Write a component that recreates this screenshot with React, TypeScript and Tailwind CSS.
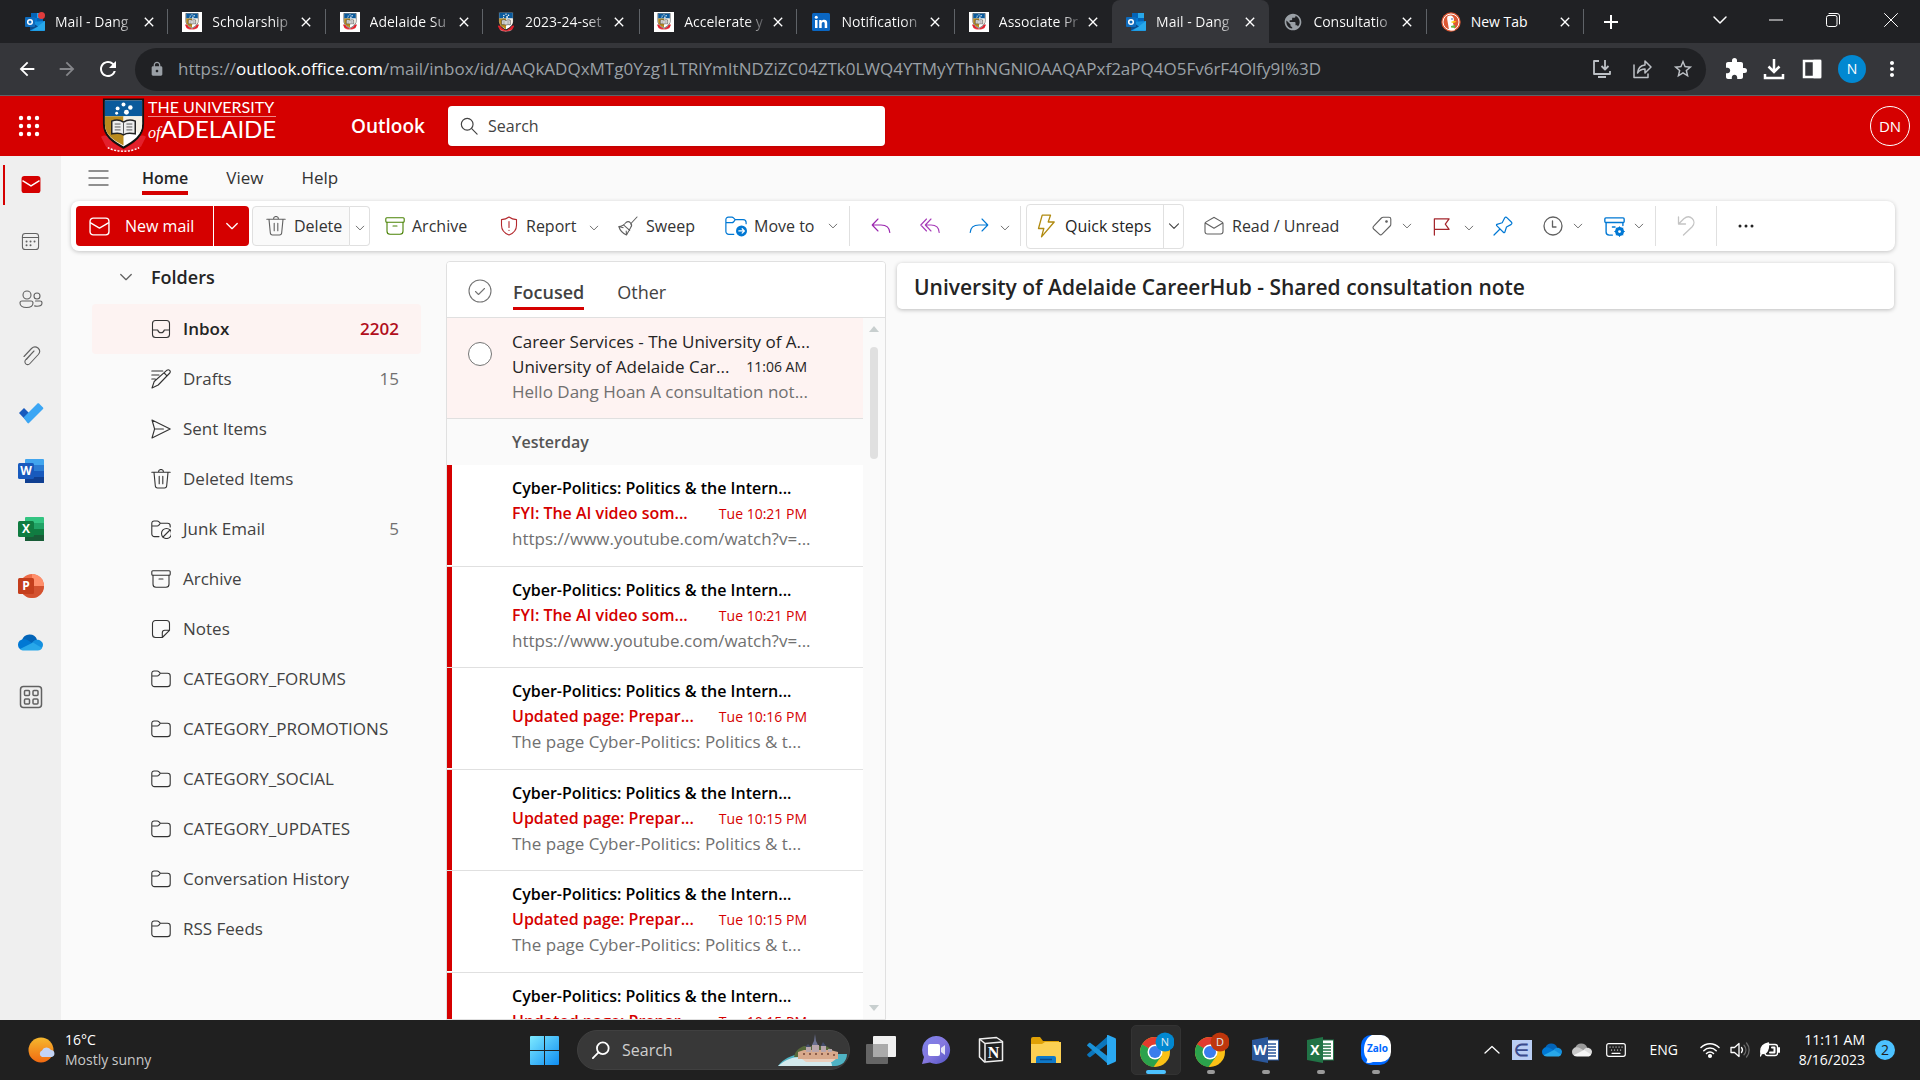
import React from "react";
import {
  MdArrowBack, MdArrowForward, MdRefresh, MdLock, MdStarBorder, MdExtension, MdMoreVert, MdAdd, MdClose, MdPublic,
} from "react-icons/md";

type P = { className?: string };
type SP = P & { children: React.ReactNode; box?: string; sw?: number };

const Svg = ({ className = "size-5", children, box = "0 0 20 20", sw = 1.1 }: SP) => (
  <svg viewBox={box} className={`shrink-0 ${className}`} fill="none" stroke="currentColor" strokeWidth={sw} strokeLinecap="round" strokeLinejoin="round" aria-hidden="true">
    {children}
  </svg>
);

/* ---------- line icons ---------- */
const Chevron = ({ className = "w-3 h-3 text-[#616161]" }: P) => (
  <Svg className={className} box="0 0 12 12" sw={1.1}><path d="M1.5 3.8 6 8.3l4.5-4.5" /></Svg>
);
const Mail = ({ className }: P) => (
  <Svg className={className} sw={1.3}><rect x="1" y="2" width="18" height="16" rx="3" /><path d="m1.5 6.5 8.5 5 8.5-5" /></Svg>
);
const Trash = ({ className }: P) => (
  <Svg className={className}><path d="M.8 3.2h18.4M7.5 3a2.5 2.5 0 0 1 5 0M3 3.4l1.3 13.4c.1 1.2 1 2.2 2.2 2.2h7c1.2 0 2.1-1 2.2-2.2L17 3.4M8.2 7.2v7.6M11.8 7.2v7.6" /></Svg>
);
const Archive = ({ className }: P) => (
  <Svg className={className}><rect x=".8" y="1.8" width="18.4" height="4.4" rx="1" /><path d="M2 6.4v8.8A3 3 0 0 0 5 18.2h10a3 3 0 0 0 3-3V6.4M8 10h4" /></Svg>
);
const Shield = ({ className }: P) => (
  <Svg className={className}><path d="M10 1c2.2 1.7 4.6 2.5 7.5 2.6v5.6c0 5-3 8-7.5 9.8-4.5-1.8-7.5-4.8-7.5-9.8V3.6C5.4 3.5 7.8 2.7 10 1ZM10 5.5v6M10 14.2v.2" /></Svg>
);
const Broom = ({ className }: P) => (
  <Svg className={className}><path d="m19 1-6.5 7M8 6.5c1.5-1.2 3.3-.9 4.5.4 1.3 1.3 1.5 3 .2 4.5L8.5 19C5 17.5 2 14.5.8 10.5 3.5 10.5 6 9 8 6.5ZM5.5 8.900l6.200 5.400M8.500 19l-.3-4M.8 10.500l4.400 1.200" /></Svg>
);
const folderPath = "M.8 4.2A2.2 2.2 0 0 1 3 2h3.3c.6 0 1 .2 1.4.6l1.6 1.6H16.5a2.7 2.7 0 0 1 2.7 2.7v8a2.7 2.7 0 0 1-2.7 2.7H3.5a2.7 2.7 0 0 1-2.7-2.7ZM.8 7h5.500c.6 0 1-.2 1.4-.6l1.6-2.2";
const openFolder = "M8 17.6H3.500a2.7 2.7 0 0 1-2.7-2.7V4.2A2.2 2.2 0 0 1 3 2h3.3c.6 0 1 .2 1.4.6l1.6 1.6H16.5a2.7 2.7 0 0 1 2.7 2.7v1M.8 7h5.5c.6 0 1-.2 1.4-.6l1.6-2.2";
const Folder = ({ className }: P) => <Svg className={className}><path d={folderPath} /></Svg>;
const FolderMove = ({ className }: P) => (
  <Svg className={className}><path d={openFolder} /><circle cx="15" cy="14.5" r="5" fill="#0078d4" stroke="none" /><path d="M12.6 14.5h4.8M15.6 12.5l2 2-2 2" stroke="#fff" /></Svg>
);
const Junk = ({ className }: P) => (
  <Svg className={className}><path d={openFolder} /><circle cx="15.5" cy="14.5" r="5" /><path d="m12 18 7-7" /></Svg>
);
const Reply = ({ className }: P) => <Svg className={className}><path d="M7 3 1.2 9 7 15M1.5 9h8.5c5 0 8.500 2.800 8.800 7.500" /></Svg>;
const ReplyAll = ({ className }: P) => <Svg className={className}><path d="M6.5 3 .8 9l5.7 6M11 3 5.3 9l5.7 6M5.5 9H11c5 0 8 3 8.2 7.5" /></Svg>;
const Forward = ({ className }: P) => <Svg className={className}><path d="m13 3 5.8 6L13 15M18.5 9H10C5 9 1.5 11.8 1.2 16.5" /></Svg>;
const Bolt = ({ className }: P) => <Svg className={className} sw={1.3} box="0 0 20 24"><path d="M6.200 1.200h8.300L12.200 8h6L5.500 22.800l2.300-8.300H2.500Z" /></Svg>;
const MailRead = ({ className }: P) => (
  <Svg className={className}><path d="M1 7.500c0-.6.3-1.100.8-1.400L9.300 1.700c.4-.3 1-.3 1.400 0l7.500 4.400c.5.300.8.800.8 1.400v8a2.500 2.500 0 0 1-2.500 2.500h-13A2.500 2.500 0 0 1 1 15.500ZM1.300 7l8.700 5.200L18.700 7" /></Svg>
);
const Tag = ({ className }: P) => (
  <Svg className={className}><path d="M11.200 1.200h5.800c1 0 1.800.8 1.800 1.800v5.300c0 .7-.2 1.200-.7 1.700l-8 8.200c-.8.800-2 .8-2.800 0L1.700 13c-.8-.8-.8-2 0-2.800l7.700-8.200c.5-.5 1.100-.8 1.800-.8Z" /><circle cx="14.5" cy="5.5" r=".8" fill="currentColor" /></Svg>
);
const Flag = ({ className }: P) => <Svg className={className} sw={1.3}><path d="M2.500 19V2h15.500l-4 5.500 4 5.500H2.500" /></Svg>;
const Pin = ({ className }: P) => <Svg className={className} sw={1.2}><path d="M11.500 2.200c.6-1.200 1.600-1.400 2.600-.4l4.200 4.200c1 1 .7 2-.4 2.600L13.500 11l-1.700 5.200c-.2.6-.8.7-1.200.3L3.700 9.600c-.4-.4-.3-1 .3-1.200l5.200-1.700ZM7 13l-6 6" /></Svg>;
const Clock = ({ className }: P) => <Svg className={className} sw={1.3}><circle cx="10" cy="10" r="9" /><path d="M9.500 5v6H13" /></Svg>;
const ArchiveGear = ({ className }: P) => (
  <Svg className={className} sw={1.3}><rect x=".8" y="1.8" width="18.4" height="4.4" rx="1" /><path d="M2 6.4v8.8a3 3 0 0 0 3 3h3M18 6.4V9M8 10.5h2.5" /><circle cx="14.8" cy="14.8" r="3" strokeWidth="2.6" /><path d="M14.8 10.2v9.2M10.2 14.8h9.2M11.6 11.6l6.4 6.4M18 11.6 11.6 18" strokeWidth="1" /><circle cx="14.8" cy="14.8" r="1.3" fill="#fff" stroke="none" /></Svg>
);
const Undo = ({ className }: P) => <Svg className={className} sw={1.3}><path d="M2.500 1v7H9.500M2.800 7.700l5-4.900c3-2.600 6.300-2.300 8.400-.3 2.300 2.300 2.300 5.700 0 8.200L7.500 19" /></Svg>;
const Inbox = ({ className }: P) => <Svg className={className}><rect x="1.5" y="1.5" width="17" height="17" rx="3" /><path d="M1.5 11h5.200c.4 1.700 1.600 2.700 3.300 2.700s2.900-1 3.300-2.700h5.200" /></Svg>;
const Draft = ({ className }: P) => <Svg className={className}><path d="M16 1.200a2 2 0 0 1 2.800 2.800L7.200 16 1 19l2.200-6.500ZM13.200 4l2.800 2.800M.8 2h11M.8 6H8M.8 10h3.500" /></Svg>;
const Send = ({ className }: P) => <Svg className={className}><path d="M1 1l18.200 9L1 19l2.600-9ZM3.600 10h8.800" /></Svg>;
const Note = ({ className }: P) => <Svg className={className}><path d="M4.500 1.500h11a3 3 0 0 1 3 3v6.800L11.300 18.500H4.500a3 3 0 0 1-3-3v-11a3 3 0 0 1 3-3ZM18.300 11.300h-4.500a2.500 2.500 0 0 0-2.500 2.500v4.500" /></Svg>;
const Magnifier = ({ className, sw = 1.3 }: P & { sw?: number }) => <Svg className={className} sw={sw}><circle cx="8" cy="8" r="6.5" /><path d="m13 13 6 6" /></Svg>;

/* ---------- brand drawings ---------- */
const Crest = ({ className = "w-5 h-5" }: P) => (
  <svg viewBox="0 0 48 56" className={`shrink-0 ${className}`} aria-hidden="true">
    <path d="M1 39c5-3 9 0 12 6l11 7 11-7c3-6 7-9 12-6l-5 10c-8 6-28 8-36 0Z" fill="#e3202c" />
    <path d="M4 1h40v25c0 12-9 18-20 24C13 44 4 38 4 26Z" fill="#fff" stroke="#111" strokeWidth="2" />
    <path d="M5 2h38v16H5Z" fill="#0a5a9c" />
    <path d="M5 18h19v30C13 42 5 37 5 26Z" fill="#b98a1e" />
    <path d="M24 18h19v8c0 4-1 7-3 10L24 24Z" fill="#f4f0e6" />
    <path d="M12 23c5-2 9-1 12 1 3-2 7-3 12-1v13c-5-1-9-1-12 1-3-2-7-2-12-1Z" fill="#eee" stroke="#222" strokeWidth="1.5" />
    <path d="M24 24v12M15 26h6M15 29h6M15 32h6M27 26h6M27 29h6M27 32h6" stroke="#555" />
    <g fill="#fff"><circle cx="24" cy="6" r="2" /><circle cx="18" cy="10" r="2" /><circle cx="31" cy="9" r="2.3" /><circle cx="27" cy="14" r="2.5" /><circle cx="17" cy="15" r="1.5" /></g>
    <path d="M8 50c8 5 24 5 32 0" fill="none" stroke="#fff" strokeWidth="1.5" strokeDasharray="2 1.5" />
  </svg>
);
const CrestTile = () => <span className="grid size-5 shrink-0 place-items-center bg-white"><Crest className="h-[17px] w-4" /></span>;
const OutlookIcon = ({ badge }: { badge?: boolean }) => (
  <svg viewBox="0 0 20 20" className="size-5 shrink-0" aria-hidden="true">
    <path d="M6 1h12v10H6Z" fill="#0364b8" /><path d="M12 1h6v5h-6Z" fill="#28a8ea" /><path d="M6 6h6v5H6Z" fill="#0078d4" />
    <path d="m5 10 15-1v9c0 .6-.4 1-1 1H6c-.6 0-1-.4-1-1Z" fill="#1490df" /><path d="m20 9-13 9.500h12c.6 0 1-.4 1-1Z" fill="#28a8ea" /><path d="m5 9 8 5.500-8 4Z" fill="#0a4b8c" />
    <rect x="0" y="5" width="10" height="10" rx="1" fill="#0f6cbd" /><circle cx="5" cy="10" r="2.3" fill="none" stroke="#fff" strokeWidth="1.5" />
    {badge && <circle cx="16.5" cy="3.5" r="3.5" fill="#e03c3c" />}
  </svg>
);
const LinkedIn = () => (
  <svg viewBox="0 0 20 20" className="size-5 shrink-0" aria-hidden="true"><rect x="1" y="1" width="18" height="18" rx="1.5" fill="#0a66c2" />
    <path d="M4 8h2.500v8H4ZM8.200 8h2.400v1.200c.5-.9 1.400-1.400 2.600-1.400 2.300 0 3 1.400 3 3.500V16h-2.500v-4.200c0-1.100-.3-1.900-1.300-1.900-1.200 0-1.700.9-1.700 2.100v4H8.200Z" fill="#fff" /><circle cx="5.250" cy="5.3" r="1.5" fill="#fff" /></svg>
);
const Duck = () => (
  <svg viewBox="0 0 20 20" className="size-5 shrink-0" aria-hidden="true"><circle cx="10" cy="10" r="9.7" fill="#de5833" /><circle cx="10" cy="10" r="8" fill="none" stroke="#fff" />
    <path d="M7 4c3-1.500 6 0 6 4l-1 3 2 7c-2 .8-4 .6-6-.2L6.500 9C6 6.500 6 5 7 4Z" fill="#fff" /><path d="M10.500 9.500c2-.6 4-.8 5 0-1 1-3 1.500-5 1.200Z" fill="#fdd20a" /><path d="m10 14 4-1v3l-4-.5Z" fill="#65bc46" /><circle cx="11" cy="7" r=".8" fill="#2d4f8e" /></svg>
);
const Todo = () => (
  <svg viewBox="0 0 26 22" className="h-[22px] w-[26px]" aria-hidden="true"><path d="m1 11 5-5 8 8-4.500 6Z" fill="#185abd" /><path d="m5.500 15.500 14-14c.5-.5 1-.5 1.500 0l4 4c.5.500.5 1 0 1.500l-14 14c-.5.5-1 .5-1.500 0Z" fill="#3ba6f4" /></svg>
);
const Office = ({ letter, c }: { letter: string; c: string[] }) => (
  <svg viewBox="0 0 26 24" className="h-6 w-[26px]" aria-hidden="true">
    <rect x="7" y="0" width="19" height="24" rx="1" fill={c[0]} /><path d="M7 6h19v18H7Z" fill={c[1]} /><path d="M7 12h19v12H7Z" fill={c[2]} /><path d="M7 18h19v5a1 1 0 0 1-1 1H7Z" fill={c[3]} />
    <rect x="0" y="4" width="16" height="16" rx="1.5" fill={c[4]} />
    <text x="8" y="16" textAnchor="middle" fontSize="12" fontWeight="700" fontFamily="Open Sans, sans-serif" fill="#fff">{letter}</text>
  </svg>
);
const PowerPoint = () => (
  <svg viewBox="0 0 26 24" className="h-6 w-[26px]" aria-hidden="true">
    <circle cx="14" cy="12" r="12" fill="#ed6c47" /><path d="M14 0a12 12 0 0 1 12 12H14Z" fill="#ff8f6b" /><path d="M26 12a12 12 0 0 1-24 0Z" fill="#d35230" />
    <rect x="0" y="4" width="16" height="16" rx="1.5" fill="#c43e1c" />
    <text x="8" y="16" textAnchor="middle" fontSize="12" fontWeight="700" fontFamily="Open Sans, sans-serif" fill="#fff">P</text>
  </svg>
);
const Cloud = ({ c, className }: P & { c: string[] }) => (
  <svg viewBox="0 0 25 17" className={className} aria-hidden="true"><path d="M4 6a8 8 0 0 1 15-.5l-6 6Z" fill={c[0]} /><path d="M5.500 5.200C9 5 11 7 15 9.500L8 14l-5 1.500C1 15 0 13 0 10.800a5.500 5.500 0 0 1 5.500-5.600Z" fill={c[1]} /><path d="M14 9c1.500-2 3-3.200 5-3.200 3 0 6 2 6 5.200a5 5 0 0 1-2 4Z" fill={c[2]} /><path d="m2 15 13-6.500L24 14c-1 1.800-2.500 2.500-4 2.500H6c-1.700 0-3-.5-4-1.500Z" fill={c[3]} /></svg>
);
const Chrome = ({ letter, color, label }: { letter: string; color: string; label: string }) => (
  <svg viewBox="0 0 36 36" className="size-9" role="img" aria-label={label}>
    <circle cx="17" cy="20" r="15" fill="#fbc116" /><path d="M17 20 4 12.500A15 15 0 0 1 30 12.500H17Z" fill="#e33b2e" /><path d="M17 20 4 12.500A15 15 0 0 0 15.500 35l8-11Z" fill="#2ba24c" /><path d="m10.500 24-6.500-11.500L17 20Z" fill="#2ba24c" />
    <circle cx="17" cy="20" r="7.5" fill="#fff" /><circle cx="17" cy="20" r="6" fill="#3b7ded" />
    <circle cx="27" cy="10" r="9.5" fill={color} /><text x="27" y="14" textAnchor="middle" fontSize="11" fontFamily="Open Sans, sans-serif" fill="#dfe9ef">{letter}</text>
  </svg>
);
const OldOffice = ({ letter, color }: { letter: string; color: string }) => (
  <svg viewBox="0 0 28 28" className="size-7" aria-hidden="true"><rect x="13" y="4" width="13.5" height="20" fill="#fff" stroke={color} /><path d="M15 8h9M15 11h9M15 14h9M15 17h9M15 20h9" stroke={color} strokeWidth="1.5" /><path d="m0 4 16-3v26L0 24Z" fill={color} />
    <text x="8" y="19" textAnchor="middle" fontSize="14" fontWeight="700" fontFamily="Open Sans, sans-serif" fill="#fff">{letter}</text></svg>
);
const Castle = () => (
  <svg viewBox="0 0 70 34" className="h-[34px] w-[70px]" aria-hidden="true">
    <path d="M0 33c5-7 13-11 23-12h46c0 7-5 12-12 12Z" fill="#4fb3c4" /><path d="M0 33c7-6 14-9 22-9h28c2 3 4 6 4 9Z" fill="#d3e9ec" />
    <path d="M16 24c1-6 5-9 10-11h22c6 3 10 7 11 11Z" fill="#56683a" /><path d="M20 19l6-2h26l8 2v7H20Z" fill="#d8a98c" /><path d="M24 26h34l-4 3H28Z" fill="#e9cdbb" />
    <path d="M28 14h5v5h-5ZM34 12h7v7h-7ZM43 13h5v6h-5ZM50 16h4v3h-4Z" fill="#b9a6ac" />
    <path d="M37 1l1 7 2 4h-6l2-4Z" fill="#6b7190" /><path d="m27 14 3-3 3 3ZM43 13l2-4 3 4Z" fill="#454d6c" />
    <path d="M25 20h2v2h-2ZM31 20h2v2h-2ZM37 20h2v2h-2ZM43 20h2v2h-2ZM49 20h2v2h-2ZM55 21h2v2h-2Z" fill="#8c5d4a" />
  </svg>
);

/* ---------- data ---------- */
const tabs: { t: string; i: React.ReactNode; active?: boolean }[] = [
  { t: "Mail - Dang", i: <OutlookIcon badge /> },
  { t: "Scholarship", i: <CrestTile /> },
  { t: "Adelaide Su", i: <CrestTile /> },
  { t: "2023-24-set", i: <Crest className="h-5 w-[18px]" /> },
  { t: "Accelerate y", i: <CrestTile /> },
  { t: "Notification", i: <LinkedIn /> },
  { t: "Associate Pr", i: <CrestTile /> },
  { t: "Mail - Dang", i: <OutlookIcon />, active: true },
  { t: "Consultatio", i: <MdPublic className="size-5 shrink-0 text-[#9aa0a6]" /> },
  { t: "New Tab", i: <Duck /> },
];
const folders = [
  { n: "Inbox", I: Inbox, c: "2202" }, { n: "Drafts", I: Draft, c: "15" }, { n: "Sent Items", I: Send }, { n: "Deleted Items", I: Trash },
  { n: "Junk Email", I: Junk, c: "5" }, { n: "Archive", I: Archive }, { n: "Notes", I: Note }, { n: "CATEGORY_FORUMS", I: Folder },
  { n: "CATEGORY_PROMOTIONS", I: Folder }, { n: "CATEGORY_SOCIAL", I: Folder }, { n: "CATEGORY_UPDATES", I: Folder },
  { n: "Conversation History", I: Folder }, { n: "RSS Feeds", I: Folder },
];
const fyi = { s: "FYI: The AI video som...", p: "https://www.youtube.com/watch?v=..." };
const upd = { s: "Updated page: Prepar...", p: "The page Cyber-Politics: Politics & t..." };
const mails = [
  { ...fyi, t: "Tue 10:21 PM" }, { ...fyi, t: "Tue 10:21 PM" }, { ...upd, t: "Tue 10:16 PM" },
  { ...upd, t: "Tue 10:15 PM" }, { ...upd, t: "Tue 10:15 PM" }, { ...upd, t: "Tue 10:15 PM" },
];

function BrowserBar() {
  return (
    <header className="shrink-0 bg-[#202124] text-white">
      <div className="flex h-[43px] pl-[11px]">
        <div role="tablist" className="flex max-w-[1573px] flex-1">
          {tabs.map((tab, i) => (
            <div key={i} className={`relative flex min-w-0 flex-1 items-center pl-[14px] ${tab.active ? "rounded-t-lg bg-[#35363a]" : ""}`}>
              {tab.i}
              <button role="tab" aria-selected={!!tab.active} className={`ml-[10px] w-[82px] text-left text-[14px] leading-5 whitespace-nowrap ${tab.t === "New Tab" ? "" : "bg-[linear-gradient(to_right,#fff_62px,#4a4b4f_80px)] bg-clip-text text-transparent"}`}>{tab.t}</button>
              <button aria-label="Close tab" className="ml-1"><MdClose className="size-4" /></button>
              {!tab.active && i !== 6 && <span className="absolute top-[9px] right-0 h-[25px] w-px bg-[#5f6368]" />}
            </div>
          ))}
        </div>
        <button aria-label="New tab" className="ml-[15px] self-center"><MdAdd className="size-6" /></button>
        <div className="ml-auto flex items-center pr-[18px] pb-1">
          <button aria-label="Search tabs" className="w-14"><Chevron className="mx-auto size-4 text-white" /></button>
          <button aria-label="Minimize" className="w-14"><Svg className="mx-auto size-[14px]" box="0 0 14 14" sw={1}><path d="M0 7h14" /></Svg></button>
          <button aria-label="Restore" className="w-[58px]"><Svg className="mx-auto size-[14px]" box="0 0 14 14" sw={1}><rect x=".5" y="2.5" width="10.5" height="11" rx="2" /><path d="M3 .5h8a2.500 2.500 0 0 1 2.500 2.500v8" /></Svg></button>
          <button aria-label="Close" className="ml-[18px] w-[22px]"><Svg className="mx-auto size-[14px]" box="0 0 14 14" sw={1}><path d="m.5.500 13 13M13.500.500l-13 13" /></Svg></button>
        </div>
      </div>
      <div className="flex h-[53px] items-center border-b border-[#5f6368] bg-[#35363a] pl-4">
        <button aria-label="Back"><MdArrowBack className="size-[22px]" /></button>
        <button aria-label="Forward" className="ml-[18px]"><MdArrowForward className="size-[22px] text-[#85868a]" /></button>
        <button aria-label="Reload" className="ml-[18px]"><MdRefresh className="size-6" /></button>
        <div className="ml-[15px] flex h-[43px] min-w-0 flex-1 items-center rounded-full bg-[#202124] pr-3 pl-[14px] text-[#9aa0a6]">
          <MdLock className="size-4 shrink-0" />
          <div className="ml-[13px] min-w-0 flex-1 overflow-hidden text-[17px] leading-6 whitespace-nowrap">
            https://<span className="text-white">outlook.office.com</span>/mail/inbox/id/AAQkADQxMTg0Yzg1LTRlYmItNDZiZC04ZTk0LWQ4YTMyYThhNGNlOAAQAPxf2aPQ4O5Fv6rF4Olfy9I%3D
          </div>
          <div className="flex items-center gap-5 text-[#bdc1c6]">
            <button aria-label="Install"><Svg sw={1.8}><path d="M7 2H2v13h16v-3M13 1v9M9.500 7l3.500 3.500L16.500 7M6 18h8" strokeLinecap="butt" /></Svg></button>
            <button aria-label="Share"><Svg sw={1.5}><path d="M2 6v12.500h14V15M5.500 14c.5-5 3-7.500 7.500-8V2l6 6-6 6v-4c-3.500 0-5.500 1-7.500 4Z" /></Svg></button>
            <button aria-label="Bookmark"><MdStarBorder className="size-[22px]" /></button>
          </div>
        </div>
        <div className="ml-[18px] flex items-center gap-[14px] pr-4">
          <button aria-label="Extensions"><MdExtension className="size-6" /></button>
          <button aria-label="Downloads"><Svg className="size-6" box="0 0 24 24" sw={2.5}><path d="M12 2v12M6.500 9.500l5.500 5.500 5.500-5.500M3 17v4h18v-4" strokeLinecap="butt" strokeLinejoin="miter" /></Svg></button>
          <button aria-label="Side panel"><Svg className="size-6" box="0 0 24 24" sw={2.5}><path d="M4 4h16v16H4Z" strokeLinejoin="miter" /><path d="M14 4h6v16h-6Z" fill="currentColor" /></Svg></button>
          <button className="size-7 rounded-full bg-[#0288d1] text-[14px] leading-7">N</button>
          <button aria-label="Menu"><MdMoreVert className="size-6" /></button>
        </div>
      </div>
    </header>
  );
}

function AppHeader() {
  return (
    <div className="flex h-[60px] shrink-0 items-center bg-[#d50000] text-white">
      <button aria-label="App launcher" className="ml-[18px]">
        <svg viewBox="0 0 22 22" className="size-[22px]" fill="currentColor" aria-hidden="true">
          {[3, 11, 19].map((y) => [3, 11, 19].map((x) => <circle key={`${x}-${y}`} cx={x} cy={y} r="2.2" />))}
        </svg>
      </button>
      <div className="ml-[60px] flex h-14 w-[251px] items-start">
        <Crest className="h-14 w-[47px]" />
        <div className="ml-px flex h-[44px] flex-col justify-between font-['Lato']">
          <div className="border-b border-[#ee8888] text-[16px] leading-[18px] whitespace-nowrap">THE UNIVERSITY</div>
          <div className="flex items-baseline justify-end text-[24px] leading-6 whitespace-nowrap"><i className="font-['Liberation_Serif'] text-[16px]">of</i>ADELAIDE</div>
        </div>
      </div>
      <span className="w-[97px] text-[19px] leading-6 font-semibold">Outlook</span>
      <label className="flex h-10 w-[437px] items-center rounded-[4px] bg-white pl-3 shadow-sm">
        <Magnifier className="size-[18px] text-[#424242]" />
        <input type="search" aria-label="Search" placeholder="Search" className="ml-[10px] flex-1 bg-transparent text-[16px] leading-6 text-[#424242] outline-none placeholder:text-[#424242]" />
      </label>
      <button className="mr-[10px] ml-auto size-10 rounded-full border border-white text-[15px] leading-5">DN</button>
    </div>
  );
}

function Rail() {
  const cell = "flex h-[57px] w-full items-center justify-center text-[#616161]";
  return (
    <nav aria-label="Apps" className="relative w-[61px] shrink-0 bg-[#efefef]">
      <span className="absolute top-[9px] left-[3px] h-10 w-[2px] bg-[#d50000]" />
      <button aria-label="Mail" className={cell}><svg viewBox="0 0 20 18" className="h-[17px] w-5" aria-hidden="true"><rect width="20" height="18" rx="3" fill="#d50000" /><path d="m1 5 9 5.500L19 5" fill="none" stroke="#fff" strokeWidth="1.5" /></svg></button>
      <button aria-label="Calendar" className={cell}><Svg className="size-[19px]"><rect x="1.5" y="1.5" width="17" height="17" rx="3" /><path d="M1.500 5.800h17" /><path d="M5.800 10h.1M10 10h.1M14.200 10h.1M5.800 14h.1M10 14h.1" strokeWidth="2" /></Svg></button>
      <button aria-label="People" className={cell}><Svg className="h-5 w-6" box="0 0 24 20"><circle cx="8" cy="6" r="4" /><circle cx="18" cy="7" r="3" /><path d="M3 12h9c1.300 0 2 .8 2 2 0 3-2.500 4.500-6.500 4.500S1 17 1 14c0-1.200.7-2 2-2ZM16.500 12H21c1.200 0 2 .8 2 1.900 0 2.200-2 3.300-5 3.300-1 0-1.700-.1-2.400-.3" /></Svg></button>
      <button aria-label="Files" className={cell}><Svg><path d="m3 10.500 7.500-8c2-2 4.500-2 6.500-.5 2 1.800 2 4.500.3 6.500L9 17.500c-1.200 1.300-3 1.300-4.200.3-1.200-1.100-1.200-2.900 0-4.200L13 5M9.500 9l-4 4.500" /></Svg></button>
      <button aria-label="To Do" className={cell}><Todo /></button>
      <button aria-label="Word" className="flex h-[59px] w-full items-center justify-center"><Office letter="W" c={["#41a5ee", "#2b7cd3", "#185abd", "#103f91", "#185abd"]} /></button>
      <button aria-label="Excel" className={cell}><Office letter="X" c={["#33c481", "#21a366", "#107c41", "#185c37", "#107c41"]} /></button>
      <button aria-label="PowerPoint" className={cell}><PowerPoint /></button>
      <button aria-label="OneDrive" className={cell}><Cloud className="h-[17px] w-[25px]" c={["#0364b8", "#0078d4", "#1490df", "#28a8ea"]} /></button>
      <button aria-label="More apps" className="flex h-[52px] w-full items-center justify-center text-[#616161]"><Svg className="size-6" box="0 0 24 24" sw={1.5}><rect x="1.5" y="1.5" width="21" height="21" rx="3" /><rect x="5.5" y="5.5" width="5" height="5" rx="1" /><rect x="14" y="5.5" width="5" height="5" rx="1" /><rect x="5.5" y="14" width="5" height="5" rx="1" /><rect x="14" y="14" width="5" height="5" rx="1" /></Svg></button>
    </nav>
  );
}

function Ribbon() {
  const item = "flex h-10 shrink-0 items-center text-left";
  return (
    <div role="toolbar" aria-label="Ribbon" className="mr-[25px] ml-[10px] flex h-[50px] shrink-0 items-center rounded-lg bg-white px-[5px] text-[16px] leading-6 whitespace-nowrap text-[#333] shadow-[0_1px_4px_rgba(0,0,0,0.22)]">
      <button className={`${item} w-[137px] rounded-l-[4px] bg-[#d50000] pl-[13px] text-white`}><Mail className="mr-[15px] size-[21px]" />New mail</button>
      <button aria-label="New mail options" className="ml-px grid h-10 w-[35px] place-items-center rounded-r-[4px] bg-[#d50000]"><Chevron className="size-[14px] text-white" /></button>
      <button className={`${item} ml-[3px] w-[98px] rounded-l-[4px] border border-[#e0e0e0] bg-[#fafafa] pl-[13px]`}><Trash className="mr-2 size-5 text-[#616161]" />Delete</button>
      <button aria-label="Delete options" className="grid h-10 w-5 place-items-center rounded-r-[4px] border border-l-0 border-[#e0e0e0] pt-1"><Chevron className="size-[10px] text-[#616161]" /></button>
      <button className={`${item} ml-[15px] w-[114px]`}><Archive className="mr-[7px] size-5 text-[#498205]" />Archive</button>
      <button className={`${item} w-[119px]`}><Shield className="mr-[7px] size-5 text-[#b3282d]" />Report<Chevron className="mt-1 ml-3 size-[10px] text-[#616161]" /></button>
      <button className={`${item} w-[107px]`}><Broom className="mr-2 size-5 text-[#616161]" />Sweep</button>
      <button className={`${item} w-[125px] border-r border-[#e0e0e0]`}><FolderMove className="mr-[7px] size-[22px] text-[#0078d4]" />Move to<Chevron className="ml-[14px] size-[10px] text-[#616161]" /></button>
      <button aria-label="Reply" className={`${item} w-[61px] justify-center text-[#9b26af]`}><Reply /></button>
      <button aria-label="Reply all" className={`${item} w-[37px] justify-center text-[#a63bb8]`}><ReplyAll /></button>
      <button aria-label="Forward" className={`${item} w-[73px] border-r border-[#e0e0e0] pl-[21px] text-[#0078d4]`}><Forward /><Chevron className="mt-1 ml-[11px] size-[10px] text-[#616161]" /></button>
      <div className="ml-[5px] flex h-[45px] w-[158px] shrink-0 rounded-[4px] border border-[#e0e0e0] text-[#242424]">
        <button className="flex flex-1 items-center pl-[9px]"><Bolt className="mr-[9px] h-6 w-5 text-[#b08a10]" />Quick steps</button>
        <button aria-label="Quick steps options" className="grid w-5 place-items-center border-l border-[#e0e0e0]"><Chevron className="size-3 text-[#424242]" /></button>
      </div>
      <button className={`${item} w-[188px] pl-5`}><MailRead className="mr-2 size-5 text-[#616161]" />Read / Unread</button>
      <button aria-label="Categorize" className={`${item} w-[60px]`}><Tag className="mr-[10px] size-5 text-[#616161]" /><Chevron className="size-[10px] text-[#616161]" /></button>
      <button aria-label="Flag" className={`${item} w-[61px]`}><Flag className="mr-[13px] size-[19px] text-[#a4262c]" /><Chevron className="mt-1 size-[10px] text-[#616161]" /></button>
      <button aria-label="Pin" className={`${item} w-[50px]`}><Pin className="size-5 text-[#0078d4]" /></button>
      <button aria-label="Snooze" className={`${item} w-[61px]`}><Clock className="mr-[10px] size-5 text-[#616161]" /><Chevron className="size-[10px] text-[#616161]" /></button>
      <button aria-label="Policy" className={`${item} w-[52px] border-r border-[#e0e0e0]`}><ArchiveGear className="mr-[9px] size-[21px] text-[#0078d4]" /><Chevron className="size-[10px] text-[#616161]" /></button>
      <button aria-label="Undo" className={`${item} w-[61px] justify-center border-r border-[#e0e0e0] text-[#c4c4c4]`}><Undo /></button>
      <button aria-label="More options" className={`${item} w-[58px] justify-center text-[#242424]`}><svg viewBox="0 0 16 4" className="h-1 w-4" fill="currentColor" aria-hidden="true"><circle cx="2" cy="2" r="1.5" /><circle cx="8" cy="2" r="1.5" /><circle cx="14" cy="2" r="1.5" /></svg></button>
    </div>
  );
}

function Folders() {
  return (
    <nav aria-label="Folders" className="w-[385px] shrink-0 overflow-hidden pt-[10px] pl-[31px] text-[17px] leading-6 text-[#424242]">
      <button className="flex h-[43px] items-start pt-1 pl-[27px] text-[18px] font-semibold text-[#242424]"><Chevron className="mt-[5px] mr-[18px] size-[14px] text-[#616161]" />Folders</button>
      <ul className="w-[329px]">
        {folders.map(({ n, I, c }, i) => (
          <li key={n}>
            <button className={`flex h-[50px] w-full items-center rounded-[4px] pr-[22px] pl-[59px] ${i === 0 ? "bg-[#fdf3f2] font-semibold text-[#242424]" : ""}`}>
              <I className="mr-3 size-5 text-[#333]" />{n}
              {c && <span className={`ml-auto ${i === 0 ? "text-[#b10e1c]" : "text-[#707070]"}`}>{c}</span>}
            </button>
          </li>
        ))}
      </ul>
    </nav>
  );
}

function MessageList() {
  return (
    <section aria-label="Message list" className="mt-[10px] flex w-[440px] shrink-0 flex-col overflow-hidden rounded-t-[4px] border border-[#e0e0e0] bg-[#fafafa]">
      <div className="flex h-14 shrink-0 items-start border-b border-[#e0e0e0] bg-white pt-[17px] pl-[21px]">
        <button aria-label="Select all" className="text-[#757575]"><Svg className="size-6" box="0 0 24 24"><circle cx="12" cy="12" r="11" /><path d="m7.500 12.500 3 3 6-6" /></Svg></button>
        <div role="tablist" className="ml-[21px] flex gap-[33px] pt-px text-[18px] leading-6 text-[#424242]">
          <button role="tab" aria-selected="true" className="border-b-[3px] border-[#d50000] pb-[3px] font-semibold">Focused</button>
          <button role="tab" aria-selected="false" className="border-b-[3px] border-transparent pb-[3px]">Other</button>
        </div>
      </div>
      <div className="flex min-h-0 flex-1">
        <div className="min-w-0 flex-1 overflow-hidden text-[17px] leading-[25px] whitespace-nowrap">
          <article className="flex h-[101px] border-b border-[#e0e0e0] bg-[#fef3f2] pl-[21px]">
            <input type="checkbox" aria-label="Select message" className="mt-6 size-6 shrink-0 appearance-none rounded-full border-[1.5px] border-[#757575] bg-white" />
            <div className="ml-5 w-[295px] pt-[11px]">
              <div className="text-[#242424]">Career Services - The University of A...</div>
              <div className="flex justify-between text-[#242424]"><span>University of Adelaide Car...</span><time className="text-[14px]">11:06 AM</time></div>
              <div className="text-[#707070]">Hello Dang Hoan A consultation not...</div>
            </div>
          </article>
          <h2 className="h-[46px] pl-[65px] text-[16px] leading-[46px] font-semibold text-[#555]">Yesterday</h2>
          <ul>
            {mails.map((m, i) => (
              <li key={i} className="border-b border-[#e0e0e0] bg-white odd:h-[102px] even:h-[101px]">
                <article className="h-[100px] border-l-[5px] border-[#d50000] pt-[11px] pl-[60px]">
                  <div className="w-[295px]">
                    <div className="text-[16px] font-semibold text-black">Cyber-Politics: Politics &amp; the Intern...</div>
                    <div className="flex justify-between text-[#d50000]"><span className="text-[16px] font-semibold">{m.s}</span><time className="text-[14px]">{m.t}</time></div>
                    <div className="text-[#707070]">{m.p}</div>
                  </div>
                </article>
              </li>
            ))}
          </ul>
        </div>
        <div aria-hidden="true" className="flex w-[22px] shrink-0 flex-col items-center bg-[#fafafa] py-2 text-[#c8cfcf]">
          <svg viewBox="0 0 10 6" className="h-[6px] w-[10px]"><path d="M5 0l5 6H0Z" fill="currentColor" /></svg>
          <span className="mt-[15px] h-28 w-2 rounded-full bg-[#e0e0e0]" />
          <svg viewBox="0 0 10 6" className="mt-auto h-[6px] w-[10px]"><path d="M5 6l5-6H0Z" fill="currentColor" /></svg>
        </div>
      </div>
    </section>
  );
}

function Taskbar() {
  const cell = "relative grid h-[50px] w-[50px] place-items-center rounded-[5px]";
  const dot = <span className="absolute bottom-px h-1 w-2 rounded-full bg-[#9a9a9a]" />;
  return (
    <footer className="flex h-[60px] shrink-0 items-center bg-[#202020] text-[14px] leading-5 text-white">
      <button className="ml-7 flex w-[491px] items-center text-left">
        <svg viewBox="0 0 28 28" className="size-7" aria-hidden="true"><defs><linearGradient id="sun" x2="0" y2="1"><stop stopColor="#f5b82e" /><stop offset="1" stopColor="#f26a11" /></linearGradient></defs><circle cx="13" cy="14" r="12.5" fill="url(#sun)" /><path d="M14 21a3.500 3.500 0 0 1 0-6.500 5 5 0 0 1 9-.5 3.600 3.600 0 0 1 1 7Z" fill="#c4d4f5" /></svg>
        <span className="ml-[9px]"><span className="block">16°C</span><span className="block text-[#c8c8c8]">Mostly sunny</span></span>
      </button>
      <div className="flex items-center">
        <button aria-label="Start" className={cell}><svg viewBox="0 0 29 29" className="size-[29px]" aria-hidden="true"><defs><linearGradient id="win" x2="1" y2="1"><stop stopColor="#7deaff" /><stop offset="1" stopColor="#0f8df2" /></linearGradient></defs><path d="M0 1a1 1 0 0 1 1-1h13v14H0ZM15 0h13a1 1 0 0 1 1 1v13H15ZM0 15h14v14H1a1 1 0 0 1-1-1ZM15 15h14v13a1 1 0 0 1-1 1H15Z" fill="url(#win)" /></svg></button>
        <label className="ml-2 flex h-10 w-[273px] items-center overflow-hidden rounded-full border border-[#404040] bg-[#383838] pl-[14px]">
          <Magnifier className="size-[18px] -scale-x-100 text-white" sw={2} />
          <input type="search" aria-label="Search Windows" placeholder="Search" className="ml-3 w-[140px] bg-transparent text-[16px] leading-6 outline-none placeholder:text-[#cfcfcf]" />
          <span className="ml-[16px]"><Castle /></span>
        </label>
        <div className="ml-[6px] flex gap-[5px]">
          <button aria-label="Task view" className={cell}><svg viewBox="0 0 30 30" className="size-[30px]" aria-hidden="true"><rect x="7" y="1" width="23" height="21" rx="1" fill="#f0f0f0" /><rect x="0" y="9" width="22" height="20" rx="1" fill="#777" fillOpacity=".8" /><path d="M7 9h15v13H7Z" fill="#aaa" /></svg></button>
          <button aria-label="Chat" className={cell}><svg viewBox="0 0 30 30" className="size-[30px]" aria-hidden="true"><defs><linearGradient id="chat" x2="1" y2="1"><stop stopColor="#7b83eb" /><stop offset=".5" stopColor="#8678df" /><stop offset="1" stopColor="#4f52c4" /></linearGradient></defs><path d="M15 1a14 14 0 1 1-6 26.600L1 29l2-7A14 14 0 0 1 15 1Z" fill="url(#chat)" /><rect x="7" y="9" width="12" height="12" rx="2" fill="#fff" /><path d="m20 13 4-3v10l-4-3Z" fill="#e2e2f5" /></svg></button>
          <button aria-label="Notion" className={cell}><svg viewBox="0 0 26 28" className="h-7 w-[26px]" aria-hidden="true"><path d="m1.500 3 17-1.500 6 4v19l-18 1.500-5-5Z" fill="#202020" stroke="#eee" strokeWidth="1.5" strokeLinejoin="round" /><path d="M1.500 3 7 7.500l17.500-1.500M7 7.500V26" fill="none" stroke="#eee" strokeWidth="1.5" /><text x="15.5" y="22" textAnchor="middle" fontSize="16" fontWeight="700" fontFamily="Liberation Serif, serif" fill="#fff">N</text></svg></button>
          <button aria-label="File Explorer" className={cell}><svg viewBox="0 0 30 28" className="h-7 w-[30px]" aria-hidden="true"><path d="M0 3a2 2 0 0 1 2-2h7l3 4h16v6H0Z" fill="#e0a106" /><path d="M0 8h11l3-2h16v21H0Z" fill="#fcd053" /><path d="M5 27v-5a2 2 0 0 1 2-2h16a2 2 0 0 1 2 2v5Z" fill="#0f79c9" /><path d="M9 23.500h12" stroke="#08498a" strokeWidth="1.5" /></svg></button>
          <button aria-label="Visual Studio Code" className={cell}><svg viewBox="0 0 30 30" className="size-[30px]" aria-hidden="true"><path d="M22 1 1.500 19c-.6.500-.6 1 0 1.500L3 22c.5.400 1 .4 1.500 0L22 8.500Z" fill="#0b76bc" /><path d="M22 29 1.500 11c-.6-.5-.6-1 0-1.500L3 8c.5-.4 1-.4 1.500 0L22 21.500Z" fill="#1a92d8" /><path d="m22 0 7 3c.6.300 1 .8 1 1.500v21c0 .7-.4 1.200-1 1.500l-7 3c-1 .3-1-.2-1-1V1c0-.8 0-1.300 1-1Z" fill="#2aa9f2" /></svg></button>
          <button className={`${cell} border border-[#333] bg-[#2d2d2d]`}><Chrome letter="N" color="#0288d1" label="Chrome, profile N" /><span className="absolute bottom-0 h-1 w-5 rounded-full bg-[#4cc2ff]" /></button>
          <button className={cell}><Chrome letter="D" color="#bf360c" label="Chrome, profile D" />{dot}</button>
          <button aria-label="Word" className={cell}><OldOffice letter="W" color="#2b579a" />{dot}</button>
          <button aria-label="Excel" className={cell}><OldOffice letter="X" color="#217346" />{dot}</button>
          <button aria-label="Zalo" className={cell}><svg viewBox="0 0 30 30" className="size-[30px]" aria-hidden="true"><rect width="29" height="30" rx="10" fill="#0068ff" /><path d="M11 0h9a10 10 0 0 1 10 10v7a10 10 0 0 1-10 10h-8c-2 1-5 1.300-7 .6 1-1 1.500-2 1-3.600A13 13 0 0 1 3 15C3 8 6 2 11 0Z" fill="#fff" /><text x="16.5" y="17" textAnchor="middle" fontSize="10" fontWeight="700" fontFamily="Open Sans, sans-serif" fill="#0068ff">Zalo</text></svg>{dot}</button>
        </div>
      </div>
      <div className="ml-auto flex items-center pr-[25px]">
        <button aria-label="Hidden icons"><Svg className="size-4" box="0 0 16 16" sw={1.3}><path d="m1 11 7-6.500L15 11" /></Svg></button>
        <span className="ml-3 grid size-5 place-items-center bg-[#b9cdf3] text-[17px] leading-4 font-semibold text-[#3a4a8c]">∈</span>
        <Cloud className="ml-[10px] h-[14px] w-5" c={["#0364b8", "#0078d4", "#1490df", "#28a8ea"]} />
        <Cloud className="ml-[10px] h-[14px] w-5" c={["#9a9a9a", "#c8c8c8", "#dcdcdc", "#f4f4f4"]} />
        <Svg className="ml-[14px] h-[14px] w-5" box="0 0 20 14" sw={1.2}><rect x=".7" y=".7" width="18.6" height="12.6" rx="2" /><path d="M4 4h.1M7 4h.1M10 4h.1M13 4h.1M16 4h.1M5.500 7h.1M8.500 7h.1M11.500 7h.1M14.500 7h.1M6 10.300h8" /></Svg>
        <button className="ml-6">ENG</button>
        <Svg className="ml-[22px] size-5" sw={1.5}><path d="M1 7.500c5-5 13-5 18 0M3.800 10.700c3.500-3.500 8.900-3.500 12.400 0M6.500 13.500c2-2 5-2 7 0" /><circle cx="10" cy="16" r="1.3" fill="currentColor" /></Svg>
        <Svg className="ml-[10px] size-5" sw={1.3}><path d="M1 7.500h3.500L9 3.500v13l-4.500-4H1Z" /><path d="M11.500 7.500c1.200 1.500 1.200 3.500 0 5" /><path d="M14 5.200c2.500 2.800 2.500 6.800 0 9.600M16.500 3c3.500 4 3.500 10 0 14" stroke="#6a6a6a" /></Svg>
        <Svg className="ml-[10px] size-5" sw={1.3}><rect x="5" y="4.5" width="12.5" height="11" rx="2.5" /><path d="M19 8v4M12 7.500h2.500v5H10" strokeWidth="2" /><path d="M1 14C0 8 3 4 8.500 3c.5 6-1 11-7 10.500l-1 2.500Z" fill="currentColor" /></Svg>
        <span className="ml-[13px] w-[72px] text-right">11:11 AM<br />8/16/2023</span>
        <span className="ml-[10px] size-5 rounded-full bg-[#4cc2ff] text-center leading-5 text-[#202020]">2</span>
      </div>
    </footer>
  );
}

export default function App() {
  return (
    <div className="flex h-screen flex-col overflow-hidden bg-[#fafafa] font-['Open_Sans',sans-serif] text-[#242424]">
      <BrowserBar />
      <AppHeader />
      <div className="flex min-h-0 flex-1">
        <Rail />
        <main className="flex min-w-0 flex-1 flex-col">
          <div className="flex h-[45px] shrink-0 items-start pt-2 pl-[27px] text-[17px] leading-6">
            <button aria-label="Toggle navigation" className="mt-[6px]"><Svg className="h-4 w-[21px]" box="0 0 21 16"><path d="M.5 1h20M.5 8h20M.5 15h20" strokeLinecap="butt" /></Svg></button>
            <div role="tablist" className="ml-[33px] flex gap-[38px] text-[#333]">
              <button role="tab" aria-selected="true" className="h-[31px] border-b-4 border-[#d50000] text-[16px] font-semibold text-[#242424]">Home</button>
              <button role="tab" aria-selected="false" className="h-[27px]">View</button>
              <button role="tab" aria-selected="false" className="h-[27px]">Help</button>
            </div>
          </div>
          <Ribbon />
          <div className="flex min-h-0 flex-1">
            <Folders />
            <MessageList />
            <section aria-label="Reading pane" className="mr-[26px] ml-[11px] min-w-0 flex-1 pt-3">
              <h1 className="h-[46px] rounded-[5px] bg-white pl-[17px] text-[21px] leading-[48px] font-semibold shadow-[0_1px_4px_rgba(0,0,0,0.25)]">University of Adelaide CareerHub - Shared consultation note</h1>
            </section>
          </div>
        </main>
      </div>
      <Taskbar />
    </div>
  );
}
